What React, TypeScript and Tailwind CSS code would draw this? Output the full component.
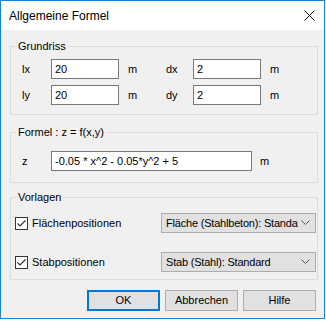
import React from 'react';

const inputClass =
  'h-[20px] border border-[#7a7a7a] bg-white pl-[3px] text-[11px] leading-[18px] text-black outline-none';

function GroupBox({ title, className, children }: { title: string; className?: string; children: React.ReactNode }) {
  return (
    <fieldset className={`ml-[9px] w-[308px] border border-[#dcdcdc] p-0 ${className ?? ''}`}>
      <legend className="ml-[5px] px-[2px] text-[11px] leading-[13px] text-black">{title}</legend>
      {children}
    </fieldset>
  );
}

function Checkbox({ label }: { label: string }) {
  return (
    <div className="flex items-center">
      <span className="flex h-[13px] w-[13px] items-center justify-center border border-[#333333] bg-white">
        <svg width="11" height="11" viewBox="0 0 11 11">
          <polyline points="1.5,5.5 4,8 9.5,2.5" fill="none" stroke="#333333" strokeWidth="1.2" />
        </svg>
      </span>
      <span className="ml-[4px] text-[11px] text-black">{label}</span>
    </div>
  );
}

function Combo({ value }: { value: string }) {
  return (
    <div className="flex h-[20px] w-[155px] items-center border border-[#adadad] bg-[#e1e1e1] pl-[4px] pr-[5px]">
      <span className="flex-1 overflow-hidden whitespace-nowrap text-[11px] tracking-[-0.2px] text-black">{value}</span>
      <svg width="9" height="6" viewBox="0 0 9 6" className="ml-[3px] shrink-0">
        <polyline points="0.5,0.5 4.5,4.5 8.5,0.5" fill="none" stroke="#555555" strokeWidth="1" />
      </svg>
    </div>
  );
}

function DialogButton({ label, primary }: { label: string; primary?: boolean }) {
  return (
    <button
      className={`flex h-[21px] w-[73px] items-center justify-center bg-[#e1e1e1] text-[11px] text-black ${
        primary ? 'border-2 border-[#0078d7]' : 'border border-[#adadad]'
      }`}
    >
      {label}
    </button>
  );
}

export default function App() {
  return (
    <div className="h-[319px] w-[325px] border border-[#1883d7] bg-[#f0f0f0] font-['Liberation_Sans',Arial,sans-serif]">
      {/* Title bar */}
      <div className="flex h-[29px] items-center justify-between bg-white pl-[8px] pr-[9px]">
        <span className="text-[12px] text-black">Allgemeine Formel</span>
        <svg width="11" height="11" viewBox="0 0 11 11">
          <line x1="0.5" y1="0.5" x2="10.5" y2="10.5" stroke="#111111" strokeWidth="1" />
          <line x1="10.5" y1="0.5" x2="0.5" y2="10.5" stroke="#111111" strokeWidth="1" />
        </svg>
      </div>

      {/* Grundriss */}
      <GroupBox title="Grundriss" className="mt-[10px]">
        <div className="flex flex-col gap-[6px] pb-[9px] pl-[11px] pt-[6px]">
          {[
            ['lx', '20', 'dx', '2'],
            ['ly', '20', 'dy', '2'],
          ].map(([a, av, b, bv]) => (
            <div key={a} className="flex items-center text-[11px] text-black">
              <span className="w-[29px]">{a}</span>
              <input className={`${inputClass} w-[68px]`} defaultValue={av} />
              <span className="ml-[9px] w-[38px]">m</span>
              <span className="w-[27px]">{b}</span>
              <input className={`${inputClass} w-[68px]`} defaultValue={bv} />
              <span className="ml-[9px]">m</span>
            </div>
          ))}
        </div>
      </GroupBox>

      {/* Formel */}
      <GroupBox title="Formel : z = f(x,y)" className="mt-[11px]">
        <div className="flex items-center pb-[11px] pl-[11px] pt-[12px] text-[11px] text-black">
          <span className="w-[29px]">z</span>
          <input className={`${inputClass} w-[201px]`} defaultValue="-0.05 * x^2 - 0.05*y^2 + 5" />
          <span className="ml-[8px]">m</span>
        </div>
      </GroupBox>

      {/* Vorlagen */}
      <GroupBox title="Vorlagen" className="mt-[8px]">
        <div className="flex flex-col gap-[19px] pb-[7px] pl-[4px] pt-[9px]">
          <div className="flex items-center justify-between pr-[1px]">
            <Checkbox label="Flächenpositionen" />
            <Combo value="Fläche (Stahlbeton): Standard" />
          </div>
          <div className="flex items-center justify-between pr-[1px]">
            <Checkbox label="Stabpositionen" />
            <Combo value="Stab (Stahl): Standard" />
          </div>
        </div>
      </GroupBox>

      {/* Buttons */}
      <div className="mt-[10px] flex justify-end gap-[5px] pr-[8px]">
        <DialogButton label="OK" primary />
        <DialogButton label="Abbrechen" />
        <DialogButton label="Hilfe" />
      </div>
    </div>
  );
}
